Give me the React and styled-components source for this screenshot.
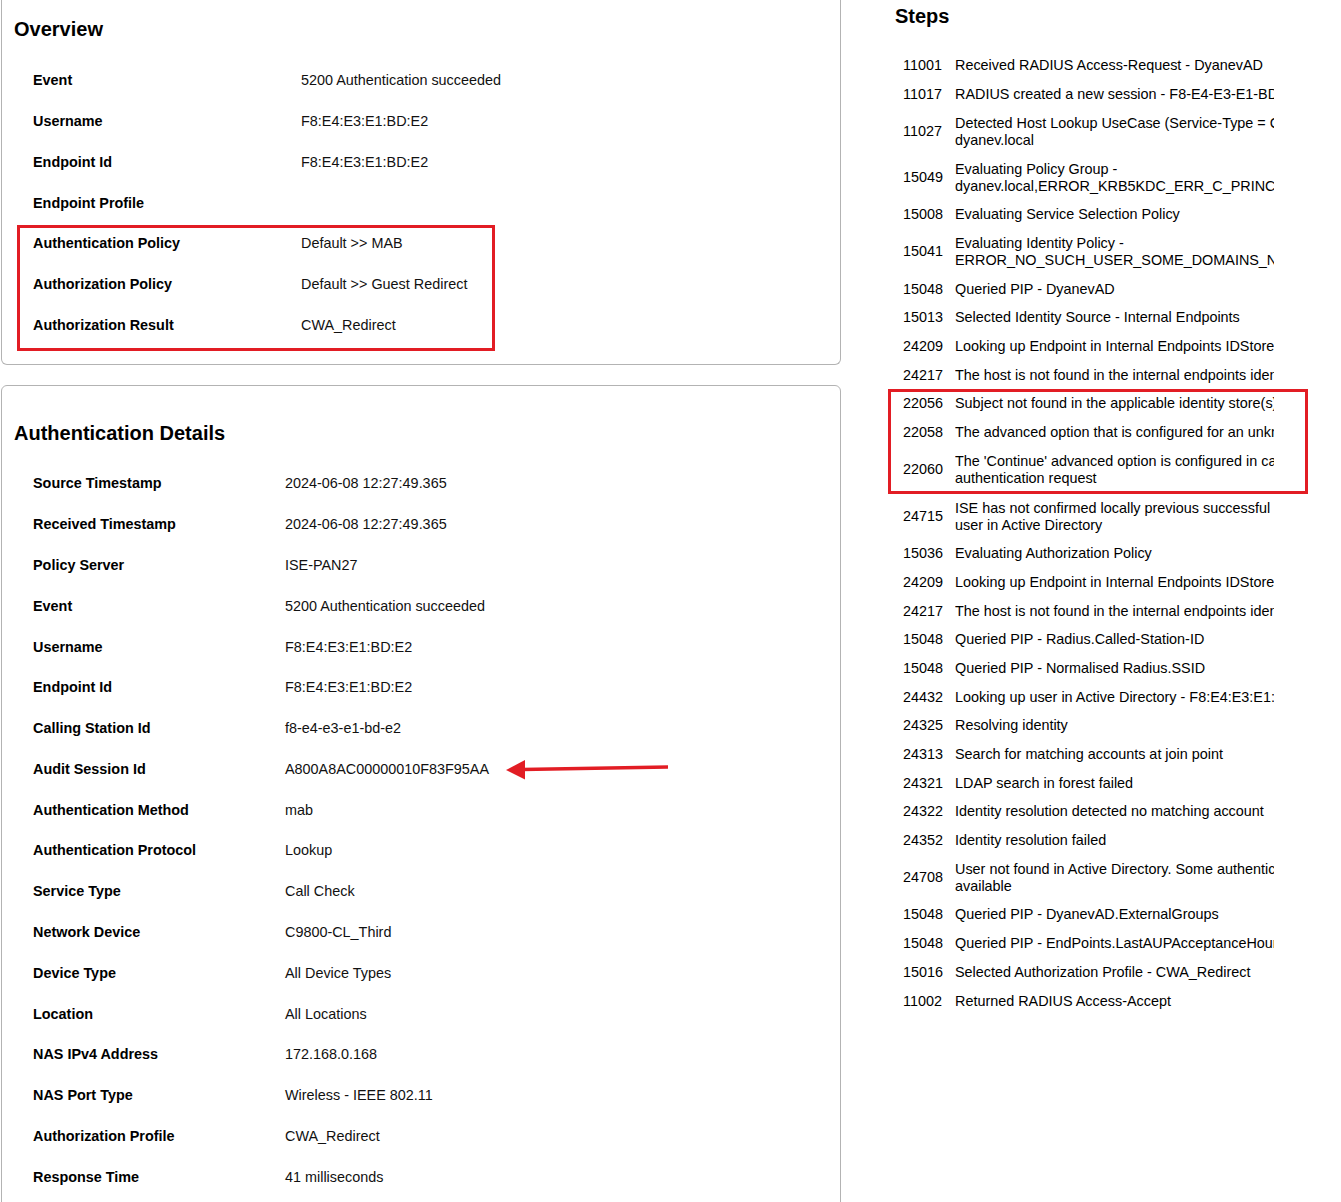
import React from 'react';
import styled, { createGlobalStyle } from 'styled-components';

const overviewRows = [
  { label: 'Event', value: '5200 Authentication succeeded' },
  { label: 'Username', value: 'F8:E4:E3:E1:BD:E2' },
  { label: 'Endpoint Id', value: 'F8:E4:E3:E1:BD:E2' },
  { label: 'Endpoint Profile', value: '' },
];

const policyRows = [
  { label: 'Authentication Policy', value: 'Default >> MAB' },
  { label: 'Authorization Policy', value: 'Default >> Guest Redirect' },
  { label: 'Authorization Result', value: 'CWA_Redirect' },
];

const detailRows = [
  { label: 'Source Timestamp', value: '2024-06-08 12:27:49.365' },
  { label: 'Received Timestamp', value: '2024-06-08 12:27:49.365' },
  { label: 'Policy Server', value: 'ISE-PAN27' },
  { label: 'Event', value: '5200 Authentication succeeded' },
  { label: 'Username', value: 'F8:E4:E3:E1:BD:E2' },
  { label: 'Endpoint Id', value: 'F8:E4:E3:E1:BD:E2' },
  { label: 'Calling Station Id', value: 'f8-e4-e3-e1-bd-e2' },
  { label: 'Audit Session Id', value: 'A800A8AC00000010F83F95AA', arrow: true },
  { label: 'Authentication Method', value: 'mab' },
  { label: 'Authentication Protocol', value: 'Lookup' },
  { label: 'Service Type', value: 'Call Check' },
  { label: 'Network Device', value: 'C9800-CL_Third' },
  { label: 'Device Type', value: 'All Device Types' },
  { label: 'Location', value: 'All Locations' },
  { label: 'NAS IPv4 Address', value: '172.168.0.168' },
  { label: 'NAS Port Type', value: 'Wireless - IEEE 802.11' },
  { label: 'Authorization Profile', value: 'CWA_Redirect' },
  { label: 'Response Time', value: '41 milliseconds' },
];

const stepsBefore = [
  { id: '11001', lines: ['Received RADIUS Access-Request - DyanevAD'] },
  { id: '11017', lines: ['RADIUS created a new session - F8-E4-E3-E1-BD-E2'] },
  { id: '11027', lines: ['Detected Host Lookup UseCase (Service-Type = Call Check (10))', 'dyanev.local'] },
  { id: '15049', lines: ['Evaluating Policy Group -', 'dyanev.local,ERROR_KRB5KDC_ERR_C_PRINCIPAL_UNKNOWN'] },
  { id: '15008', lines: ['Evaluating Service Selection Policy'] },
  { id: '15041', lines: ['Evaluating Identity Policy -', 'ERROR_NO_SUCH_USER_SOME_DOMAINS_NOT_AVAILABLE'] },
  { id: '15048', lines: ['Queried PIP - DyanevAD'] },
  { id: '15013', lines: ['Selected Identity Source - Internal Endpoints'] },
  { id: '24209', lines: ['Looking up Endpoint in Internal Endpoints IDStore - F8:E4:E3:E1:BD:E2'] },
  { id: '24217', lines: ['The host is not found in the internal endpoints identity store'] },
];

const stepsMarked = [
  { id: '22056', lines: ['Subject not found in the applicable identity store(s)'] },
  { id: '22058', lines: ['The advanced option that is configured for an unknown user is used'] },
  { id: '22060', lines: ["The 'Continue' advanced option is configured in case of a failed", 'authentication request'] },
];

const stepsAfter = [
  { id: '24715', lines: ['ISE has not confirmed locally previous successful', 'user in Active Directory'] },
  { id: '15036', lines: ['Evaluating Authorization Policy'] },
  { id: '24209', lines: ['Looking up Endpoint in Internal Endpoints IDStore - F8:E4:E3:E1:BD:E2'] },
  { id: '24217', lines: ['The host is not found in the internal endpoints identity store'] },
  { id: '15048', lines: ['Queried PIP - Radius.Called-Station-ID'] },
  { id: '15048', lines: ['Queried PIP - Normalised Radius.SSID'] },
  { id: '24432', lines: ['Looking up user in Active Directory - F8:E4:E3:E1:BD:E2'] },
  { id: '24325', lines: ['Resolving identity'] },
  { id: '24313', lines: ['Search for matching accounts at join point'] },
  { id: '24321', lines: ['LDAP search in forest failed'] },
  { id: '24322', lines: ['Identity resolution detected no matching account'] },
  { id: '24352', lines: ['Identity resolution failed'] },
  { id: '24708', lines: ['User not found in Active Directory. Some authentication domains are not', 'available'] },
  { id: '15048', lines: ['Queried PIP - DyanevAD.ExternalGroups'] },
  { id: '15048', lines: ['Queried PIP - EndPoints.LastAUPAcceptanceHours'] },
  { id: '15016', lines: ['Selected Authorization Profile - CWA_Redirect'] },
  { id: '11002', lines: ['Returned RADIUS Access-Accept'] },
];

const ArrowLeft = () => (
  <ArrowSvg width="164" height="24" viewBox="0 0 164 24">
    <line x1="17" y1="12.6" x2="163" y2="10" stroke="#e21d24" strokeWidth="3.5" />
    <polygon points="1,13 20,3 20,22.5" fill="#e21d24" />
  </ArrowSvg>
);

const StepItem = ({ step }) => (
  <StepRow>
    <StepNum>{step.id}</StepNum>
    <StepText>
      {step.lines.map((line, i) => (
        <StepLine key={i}>{line}</StepLine>
      ))}
    </StepText>
  </StepRow>
);

const App = () => {
  return (
    <>
      <GlobalStyle />
      <Page>
        <LeftColumn>
          <OverviewPanel>
            <Heading>Overview</Heading>
            {overviewRows.map((row) => (
              <Row key={row.label} $indent={31} $label={268}>
                <Label>{row.label}</Label>
                <Value>{row.value}</Value>
              </Row>
            ))}
            <Highlight>
              {policyRows.map((row) => (
                <Row key={row.label} $indent={13} $label={268}>
                  <Label>{row.label}</Label>
                  <Value>{row.value}</Value>
                </Row>
              ))}
            </Highlight>
          </OverviewPanel>

          <DetailsPanel>
            <Heading>Authentication Details</Heading>
            {detailRows.map((row) => (
              <Row key={row.label} $indent={31} $label={252} $pad={11.9}>
                <Label>{row.label}</Label>
                <Value>
                  {row.value}
                  {row.arrow && <ArrowLeft />}
                </Value>
              </Row>
            ))}
          </DetailsPanel>
        </LeftColumn>

        <StepsColumn>
          <StepsHeading>Steps</StepsHeading>
          <StepList>
            {stepsBefore.map((s, i) => (
              <StepItem key={'b' + i} step={s} />
            ))}
            <StepBox>
              {stepsMarked.map((s, i) => (
                <StepItem key={'m' + i} step={s} />
              ))}
            </StepBox>
            {stepsAfter.map((s, i) => (
              <StepItem key={'a' + i} step={s} />
            ))}
          </StepList>
        </StepsColumn>
      </Page>
    </>
  );
};

const GlobalStyle = createGlobalStyle`
  html, body {
    margin: 0;
    padding: 0;
    background: #fff;
  }
  body {
    font-family: "Liberation Sans", Arial, sans-serif;
    font-size: 14.4px;
    color: #000;
  }
`;

const Page = styled.div`
  display: flex;
  align-items: flex-start;
  width: 1341px;
  height: 1202px;
  overflow: hidden;
`;

const LeftColumn = styled.div`
  display: flex;
  flex-direction: column;
  gap: 20px;
  width: 840px;
  margin-left: 1px;
  flex-shrink: 0;
`;

const OverviewPanel = styled.section`
  border: 1px solid #b3b3b3;
  border-top: none;
  border-radius: 0 0 6px 6px;
  padding: 17px 0 13px;
`;

const DetailsPanel = styled.section`
  border: 1px solid #b3b3b3;
  border-radius: 6px 6px 0 0;
  padding: 35px 0 60px;
`;

const Heading = styled.h2`
  margin: 0 0 ${(p) => p.$gap || 18.5}px;
  padding-left: 12px;
  font-size: 20px;
  line-height: 24px;
  font-weight: bold;
  color: #000;
`;

const Row = styled.div`
  display: grid;
  grid-template-columns: ${(p) => p.$label}px 1fr;
  padding: ${(p) => p.$pad || 12}px 0 ${(p) => p.$pad || 12}px ${(p) => p.$indent}px;
  line-height: 17px;
`;

const Label = styled.div`
  font-weight: bold;
  color: #000;
`;

const Value = styled.div`
  display: flex;
  align-items: center;
  color: #111;
  white-space: nowrap;
`;

const Highlight = styled.div`
  box-sizing: border-box;
  width: 478px;
  margin: 1.5px 0 0 15px;
  border: 3px solid #e21d24;

  & > :first-child {
    padding-top: 6.5px;
  }
  & > :last-child {
    padding-bottom: 14.5px;
  }
`;

const ArrowSvg = styled.svg`
  display: block;
  margin: -4px 0 -3px 16px;
  flex-shrink: 0;
`;

const StepsColumn = styled.aside`
  margin-left: 47px;
  padding-top: 4px;
  width: 452px;
  flex-shrink: 0;
`;

const StepsHeading = styled.h2`
  margin: 0;
  padding-left: 7px;
  font-size: 20px;
  line-height: 24px;
  font-weight: bold;
  color: #000;
`;

const StepList = styled.div`
  margin-top: 23.6px;
  display: flex;
  flex-direction: column;
`;

const StepRow = styled.div`
  display: flex;
  align-items: center;
  padding: 5.85px 0 5.85px 15px;
  line-height: 17px;
  color: #000;
`;

const StepNum = styled.div`
  width: 52px;
  flex-shrink: 0;
`;

const StepText = styled.div`
  width: 319px;
  overflow: hidden;
`;

const StepLine = styled.div`
  white-space: nowrap;
`;

const StepBox = styled.div`
  box-sizing: border-box;
  width: 420px;
  border: 3px solid #e21d24;

  & > ${StepRow} {
    padding-left: 12px;
  }
  & > ${StepRow}:first-child {
    padding-top: 2.85px;
  }
  & > ${StepRow}:last-child {
    padding-bottom: 4px;
  }
`;

export default App;
